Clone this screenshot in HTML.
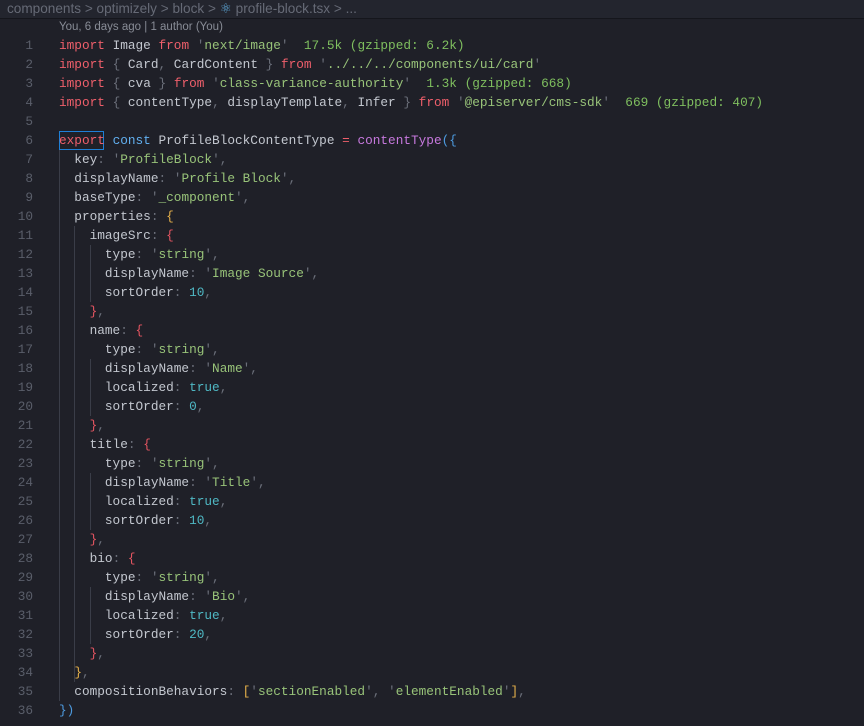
<!DOCTYPE html>
<html><head><style>
body{margin:0;width:864px;height:726px;background:#1f2028;overflow:hidden;position:relative}
.bc{position:absolute;left:0;top:0;width:864px;height:19px;background:#23252e;border-bottom:1px solid #15161c;font:13.6px "Liberation Sans",sans-serif;color:#666a76;line-height:18px;padding-left:7px;box-sizing:border-box;white-space:pre}
.lens{position:absolute;left:59px;top:21px;font:11.5px "Liberation Sans",sans-serif;color:#888c96}
.ln{position:absolute;left:0;width:33px;text-align:right;font:12.75px "Liberation Mono",monospace;color:#5a5e6a;line-height:19px}
.code{position:absolute;left:59px;font:12.75px "Liberation Mono",monospace;color:#c3c7cf;line-height:19px;white-space:pre}
.k{color:#ef5f6b}.s{color:#98c379}.p{color:#6b6f7a}.c{color:#61afef}.f{color:#c678dd}.g{color:#7fbf5f}
.n{color:#4fb8c4}.b1{color:#4d9be0}.b2{color:#e5b04a}.b3{color:#e55561}
.guide{position:absolute;width:1px;background:#3a3d48}
.cur{position:absolute;left:59px;top:131px;width:45px;height:19px;border:1px solid #1e7fd6;box-sizing:border-box}
</style></head><body>
<div class="bc">components &gt; optimizely &gt; block &gt; <span style="color:#5ea8d8">⚛</span> profile-block.tsx &gt; ...</div>
<div class="lens">You, 6 days ago | 1 author (You)</div>
<div class="guide" style="left:59px;top:150px;height:551px"></div>
<div class="guide" style="left:74px;top:226px;height:456px"></div>
<div class="guide" style="left:90px;top:245px;height:57px"></div>
<div class="guide" style="left:90px;top:359px;height:57px"></div>
<div class="guide" style="left:90px;top:473px;height:57px"></div>
<div class="guide" style="left:90px;top:587px;height:57px"></div>
<div class="cur"></div>
<div class="ln" style="top:36px">1<br>2<br>3<br>4<br>5<br>6<br>7<br>8<br>9<br>10<br>11<br>12<br>13<br>14<br>15<br>16<br>17<br>18<br>19<br>20<br>21<br>22<br>23<br>24<br>25<br>26<br>27<br>28<br>29<br>30<br>31<br>32<br>33<br>34<br>35<br>36</div>
<div class="code" style="top:36px"><span class="k">import</span> Image <span class="k">from</span> <span class="p">'</span><span class="s">next/image</span><span class="p">'</span>  <span class="g">17.5k (gzipped: 6.2k)</span>
<span class="k">import</span> <span class="p">{</span> Card<span class="p">,</span> CardContent <span class="p">}</span> <span class="k">from</span> <span class="p">'</span><span class="s">../../../components/ui/card</span><span class="p">'</span>
<span class="k">import</span> <span class="p">{</span> cva <span class="p">}</span> <span class="k">from</span> <span class="p">'</span><span class="s">class-variance-authority</span><span class="p">'</span>  <span class="g">1.3k (gzipped: 668)</span>
<span class="k">import</span> <span class="p">{</span> contentType<span class="p">,</span> displayTemplate<span class="p">,</span> Infer <span class="p">}</span> <span class="k">from</span> <span class="p">'</span><span class="s">@episerver/cms-sdk</span><span class="p">'</span>  <span class="g">669 (gzipped: 407)</span>

<span class="k">export</span> <span class="c">const</span> ProfileBlockContentType <span class="k">=</span> <span class="f">contentType</span><span class="b1">({</span>
  key<span class="p">:</span> <span class="p">'</span><span class="s">ProfileBlock</span><span class="p">',</span>
  displayName<span class="p">:</span> <span class="p">'</span><span class="s">Profile Block</span><span class="p">',</span>
  baseType<span class="p">:</span> <span class="p">'</span><span class="s">_component</span><span class="p">',</span>
  properties<span class="p">:</span> <span class="b2">{</span>
    imageSrc<span class="p">:</span> <span class="b3">{</span>
      type<span class="p">:</span> <span class="p">'</span><span class="s">string</span><span class="p">',</span>
      displayName<span class="p">:</span> <span class="p">'</span><span class="s">Image Source</span><span class="p">',</span>
      sortOrder<span class="p">:</span> <span class="n">10</span><span class="p">,</span>
    <span class="b3">}</span><span class="p">,</span>
    name<span class="p">:</span> <span class="b3">{</span>
      type<span class="p">:</span> <span class="p">'</span><span class="s">string</span><span class="p">',</span>
      displayName<span class="p">:</span> <span class="p">'</span><span class="s">Name</span><span class="p">',</span>
      localized<span class="p">:</span> <span class="n">true</span><span class="p">,</span>
      sortOrder<span class="p">:</span> <span class="n">0</span><span class="p">,</span>
    <span class="b3">}</span><span class="p">,</span>
    title<span class="p">:</span> <span class="b3">{</span>
      type<span class="p">:</span> <span class="p">'</span><span class="s">string</span><span class="p">',</span>
      displayName<span class="p">:</span> <span class="p">'</span><span class="s">Title</span><span class="p">',</span>
      localized<span class="p">:</span> <span class="n">true</span><span class="p">,</span>
      sortOrder<span class="p">:</span> <span class="n">10</span><span class="p">,</span>
    <span class="b3">}</span><span class="p">,</span>
    bio<span class="p">:</span> <span class="b3">{</span>
      type<span class="p">:</span> <span class="p">'</span><span class="s">string</span><span class="p">',</span>
      displayName<span class="p">:</span> <span class="p">'</span><span class="s">Bio</span><span class="p">',</span>
      localized<span class="p">:</span> <span class="n">true</span><span class="p">,</span>
      sortOrder<span class="p">:</span> <span class="n">20</span><span class="p">,</span>
    <span class="b3">}</span><span class="p">,</span>
  <span class="b2">}</span><span class="p">,</span>
  compositionBehaviors<span class="p">:</span> <span class="b2">[</span><span class="p">'</span><span class="s">sectionEnabled</span><span class="p">',</span> <span class="p">'</span><span class="s">elementEnabled</span><span class="p">'</span><span class="b2">]</span><span class="p">,</span>
<span class="b1">})</span></div>
</body></html>
